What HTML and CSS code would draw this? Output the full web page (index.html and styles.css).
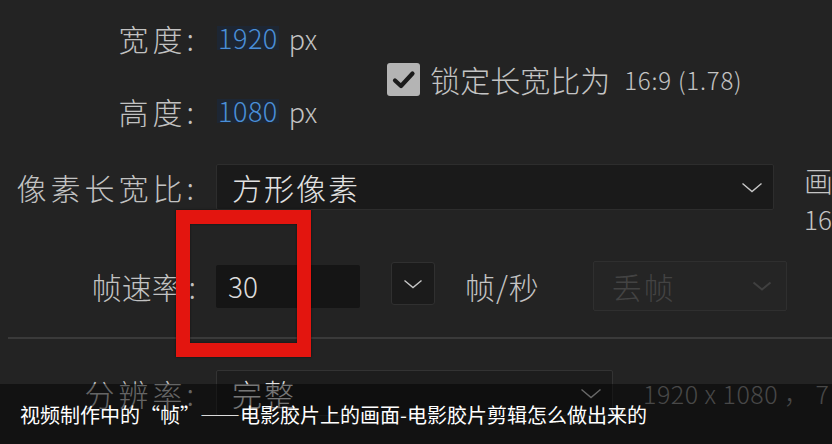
FILE: index.html
```html
<!DOCTYPE html>
<html lang="zh-CN">
<head>
<meta charset="utf-8">
<title>帧速率设置</title>
<link rel="stylesheet" href="styles.css">
</head>
<body>
<div class="panel">
  <div class="top">
    <div class="dims">
      <div class="row dim-row">
        <span class="label">宽度:</span>
        <span class="num">1920</span>
        <span class="unit">px</span>
      </div>
      <div class="row dim-row">
        <span class="label">高度:</span>
        <span class="num">1080</span>
        <span class="unit">px</span>
      </div>
    </div>
    <div class="lock">
      <span class="check">
        <svg width="33" height="33" viewBox="0 0 33 33"><path d="M8 17.5 L14 23 L25.5 10.5" fill="none" stroke="#1b1b1b" stroke-width="4.2" stroke-linecap="round" stroke-linejoin="round"/></svg>
      </span>
      <span class="lock-text">锁定长宽比为</span>
      <span class="ratio">16:9 (1.78)</span>
    </div>
  </div>

  <div class="row par-row">
    <span class="label">像素长宽比:</span>
    <div class="select wide">
      <span class="sel-text">方形像素</span>
      <svg class="chev" width="22" height="11" viewBox="0 0 22 11"><polyline points="1.5,1.5 11,9.5 20.5,1.5" fill="none" stroke="#c8c8c8" stroke-width="1.4"/></svg>
    </div>
    <div class="aside">
      <span class="aside-a">画</span>
      <span class="aside-b">16</span>
    </div>
  </div>

  <div class="row fps-row">
    <span class="label fps-label">帧速率 :</span>
    <div class="input"><span>30</span></div>
    <div class="btn">
      <svg width="20" height="10" viewBox="0 0 20 10"><polyline points="1.5,1.5 10,8.5 18.5,1.5" fill="none" stroke="#c8c8c8" stroke-width="1.4"/></svg>
    </div>
    <span class="fps-unit">帧/秒</span>
    <div class="select disabled">
      <span class="sel-text">丢帧</span>
      <svg class="chev" width="20" height="10" viewBox="0 0 20 10"><polyline points="1.5,1.5 10,8.5 18.5,1.5" fill="none" stroke="#404040" stroke-width="2"/></svg>
    </div>
  </div>

  <div class="sep"></div>

  <div class="row res-row">
    <span class="label">分辨率:</span>
    <div class="select res">
      <span class="sel-text">完整</span>
      <svg class="chev" width="22" height="11" viewBox="0 0 22 11"><polyline points="1.5,1.5 11,9.5 20.5,1.5" fill="none" stroke="#c8c8c8" stroke-width="1.4"/></svg>
    </div>
    <span class="res-info">1920 x 1080 ， 7</span>
  </div>
</div>

<div class="highlight"></div>

<div class="caption">视频制作中的“帧”——电影胶片上的画面-电影胶片剪辑怎么做出来的</div>
</body>
</html>
```

FILE: styles.css
```css
html, body {
  margin: 0;
  padding: 0;
}
body {
  width: 832px;
  height: 444px;
  overflow: hidden;
  position: relative;
  background: #232323;
  font-family: "Noto Sans CJK SC", "Noto Sans", sans-serif;
  font-weight: 300;
  color: #c4c4c4;
}
.panel {
  padding: 15px 0 0 8px;
  display: flex;
  flex-direction: column;
  width: 1000px;
}
.row {
  display: flex;
  align-items: center;
}
.label {
  width: 190px;
  flex: none;
  text-align: right;
  font-size: 30px;
  letter-spacing: 4px;
  white-space: nowrap;
  color: #c2c2c2;
  margin-right: 18px;
}
.fps-label {
  letter-spacing: 0;
  width: 188px;
  margin-right: 20px;
}
.top {
  display: flex;
}
.dims {
  display: flex;
  flex-direction: column;
  gap: 27px;
}
.dim-row {
  height: 46px;
}
.num {
  font-size: 27px;
  color: #4a8fd8;
  background: #1d2633;
  line-height: 24px;
  padding: 0 1px;
  margin-left: 1px;
  letter-spacing: 0.5px;
}
.unit {
  font-size: 27px;
  margin-left: 10px;
  color: #c2c2c2;
}
.lock {
  display: flex;
  align-items: center;
  margin-left: 70px;
  margin-top: 9px;
  align-self: center;
}
.check {
  width: 33px;
  height: 33px;
  background: #b4b4b4;
  border-radius: 3px;
  display: flex;
}
.lock-text {
  font-size: 30px;
  margin-left: 10px;
}
.ratio {
  font-size: 24px;
  margin-left: 14px;
  letter-spacing: 0.8px;
}
.par-row {
  margin-top: 30px;
  height: 46px;
}
.select {
  display: flex;
  align-items: center;
  justify-content: space-between;
  box-sizing: border-box;
  background: #1a1a1a;
  border: 1px solid #2d2d2d;
  border-radius: 2px;
  padding: 0 10px 0 15px;
}
.wide {
  width: 558px;
  height: 46px;
}
.sel-text {
  font-size: 30px;
  color: #e2e2e2;
  letter-spacing: 2px;
}
.aside {
  display: flex;
  flex-direction: column;
  align-self: flex-start;
  margin-left: 30px;
}
.aside-a {
  font-size: 29px;
  line-height: 32px;
}
.aside-b {
  font-size: 26px;
  line-height: 30px;
  margin-top: 8px;
}
.fps-row {
  margin-top: 51px;
  height: 50px;
}
.input {
  width: 144px;
  height: 43px;
  background: #151515;
  border-radius: 2px;
  display: flex;
  align-items: center;
  padding-left: 12px;
  box-sizing: border-box;
  font-size: 28px;
  color: #dcdcdc;
}
.btn {
  width: 44px;
  height: 43px;
  margin-left: 31px;
  box-sizing: border-box;
  background: #1b1b1b;
  border: 1px solid #303030;
  border-radius: 3px;
  display: flex;
  align-items: center;
  justify-content: center;
  align-self: flex-start;
  margin-top: 1px;
}
.fps-unit {
  font-size: 30px;
  margin-left: 30px;
  letter-spacing: 1px;
}
.disabled {
  width: 194px;
  height: 50px;
  margin-left: 53px;
  background: #252525;
  border-color: #2f2f2f;
  padding: 0 14px 0 18px;
}
.disabled .sel-text {
  color: #434343;
}
.sep {
  margin-top: 26px;
  height: 2px;
  background: #3a3a3a;
}
.res-row {
  margin-top: 31px;
  height: 46px;
}
.res {
  width: 397px;
  height: 46px;
  background: #1d1d1d;
  border-color: #333;
}
.res-info {
  font-size: 25px;
  color: #8a8a8a;
  margin-left: 30px;
  white-space: nowrap;
  letter-spacing: 0.5px;
}
.highlight {
  position: absolute;
  left: 176px;
  top: 210px;
  width: 107px;
  height: 119px;
  border: 14px solid #e3150f;
  box-shadow: 0 0 2px rgba(0,0,0,0.6), inset 0 0 2px rgba(0,0,0,0.6);
}
.caption {
  position: absolute;
  left: 0;
  right: 0;
  bottom: 0;
  height: 60px;
  background: rgba(0, 0, 0, 0.48);
  display: flex;
  align-items: center;
  padding-left: 20px;
  font-size: 20px;
  font-weight: 400;
  color: #ffffff;
  white-space: nowrap;
}
```
